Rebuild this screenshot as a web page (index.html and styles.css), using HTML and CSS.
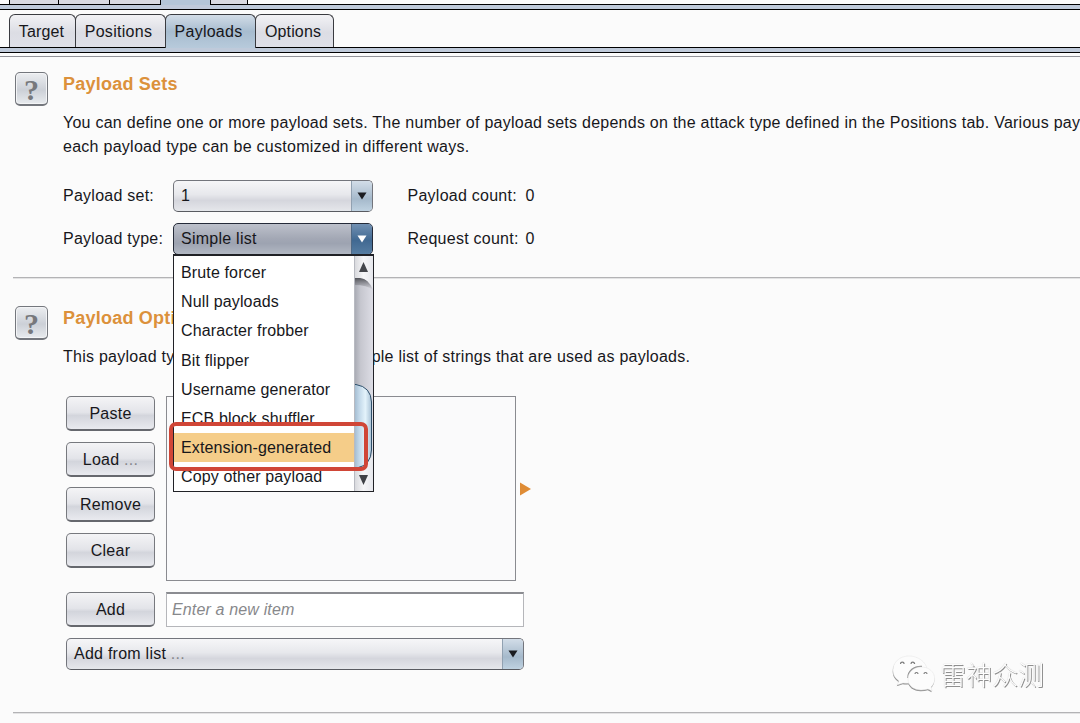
FILE: index.html
```html
<!DOCTYPE html>
<html lang="en">
<head>
<meta charset="utf-8">
<title>Payloads</title>
<link rel="stylesheet" href="styles.css">
</head>
<body>
<div class="outer-tabs"><i class="stub s1"></i><i class="stub s2"></i><i class="stub s3"></i><i class="stub s4 active"></i><i class="stub s5"></i></div>
<div class="band outer-band"></div>
<nav class="tabs">
  <div class="tab t-target">Target</div>
  <div class="tab t-positions">Positions</div>
  <div class="tab t-payloads active">Payloads</div>
  <div class="tab t-options">Options</div>
</nav>
<div class="band inner-band"></div>
<div class="pane-edge"></div>
<main>
  <section class="section sets">
    <div class="help">?</div>
    <div class="body">
      <h2>Payload Sets</h2>
      <p class="desc">You can define one or more payload sets. The number of payload sets depends on the attack type defined in the Positions tab. Various pay<br><span class="line2">each payload type can be customized in different ways.</span></p>
      <div class="form">
        <label>Payload set:</label>
        <div class="combo"><span class="value">1</span><span class="arrow"><svg width="10" height="8"><path d="M0.5 0.5h9L5 7.5z"/></svg></span></div>
        <span class="count">Payload count:</span><span class="num">0</span>
        <label class="type-label">Payload type:</label>
        <div class="combo open"><span class="value">Simple list</span><span class="arrow"><svg width="10" height="8"><path d="M0.5 0.5h9L5 7.5z"/></svg></span>
          <div class="menu">
            <div class="items">
              <div class="item">Brute forcer</div>
              <div class="item">Null payloads</div>
              <div class="item">Character frobber</div>
              <div class="item">Bit flipper</div>
              <div class="item">Username generator</div>
              <div class="item">ECB block shuffler</div>
              <div class="item selected">Extension-generated</div>
              <div class="item">Copy other payload</div>
            </div>
            <svg class="scroll" width="19" height="235" viewBox="0 0 19 235">
              <defs>
                <linearGradient id="track"><stop offset="0" stop-color="#a5a7b0"/><stop offset=".35" stop-color="#c6c7cf"/><stop offset="1" stop-color="#dddde5"/></linearGradient>
                <linearGradient id="thumb"><stop offset="0" stop-color="#9fb8cd"/><stop offset=".3" stop-color="#c2d8e9"/><stop offset=".65" stop-color="#e4f3fb"/><stop offset="1" stop-color="#a9c2d6"/></linearGradient>
                <linearGradient id="btn"><stop offset="0" stop-color="#d5d6da"/><stop offset=".5" stop-color="#f6f6f8"/><stop offset="1" stop-color="#e6e7ec"/></linearGradient>
                <linearGradient id="fade" x2="0" y2="1"><stop offset="0" stop-color="#45464c"/><stop offset="1" stop-color="#77787e" stop-opacity="0"/></linearGradient>
              </defs>
              <rect width="19" height="235" fill="url(#track)"/>
              <path d="M0 21h5q9 1 14 13-6-5-19-5z" fill="url(#fade)"/>
              <path d="M0 0h19v33q-4-10-13-11H0z" fill="url(#btn)"/>
              <path d="M9.500 6l4.500 10H5z" fill="#44464b"/>
              <path d="M0 212h4q11-3 15-14v37H0z" fill="url(#btn)"/>
              <path d="M0 128.500h2Q17 131 17.500 146v48Q17 209 3 212H0z" fill="url(#thumb)" stroke="#2e4f6a"/>
              <path d="M5 219h9l-4.500 10z" fill="#3f4146"/>
              <path d="M.5 0v235" stroke="#b8bac1"/>
            </svg>
          </div>
          <div class="callout"></div>
        </div>
        <span class="count">Request count:</span><span class="num">0</span>
      </div>
    </div>
  </section>
  <section class="section options">
    <div class="help">?</div>
    <div class="body">
      <h2>Payload Options [Simple list]</h2>
      <p class="desc">This payload type lets you configure a simple list of strings that are used as payloads.</p>
      <div class="editor">
        <div class="buttons">
          <div class="btn">Paste</div>
          <div class="btn">Load <span class="dots">...</span></div>
          <div class="btn">Remove</div>
          <div class="btn">Clear</div>
        </div>
        <div class="list"></div>
        <svg class="marker" width="11" height="14"><path d="M0 .5L11 7 0 13.500z"/></svg>
      </div>
      <div class="add-row"><div class="btn">Add</div><div class="field">Enter a new item</div></div>
      <div class="combo wide"><span class="value">Add from list <span class="dots">...</span></span><span class="arrow"><svg width="10" height="8"><path d="M0.5 0.5h9L5 7.5z"/></svg></span></div>
    </div>
  </section>
</main>
<div class="watermark">
  <svg width="44" height="38" viewBox="0 0 44 38">
    <g class="shade" transform="translate(-.3 1.200)"><path d="M17 1C8 1 1 7 1 15c0 5 2 8 6 11l-2 4 6-2q6 1 11-1l13-13C34 7 26 1 17 1z"/><path d="M29 12c-7 0-13 5-13 12s6 11 13 11q4 0 7-1l4 2-1-4c7-6 4-20-10-20z"/></g>
    <path class="bubble" d="M17 1C8 1 1 7 1 15c0 5 2 8 6 11l-2 4 6-2q6 1 11-1l13-13C34 7 26 1 17 1z"/>
    <path class="edge" d="M16 23c0-7 6-12 14-11.500"/>
    <path class="front" d="M29 12c-7 0-13 5-13 12s6 11 13 11q4 0 7-1l4 2-1-4c7-6 4-20-10-20z"/>
    <path class="eyes" d="M8.500 9a1.800 1.800 0 0 1 3.600 0M19 9a1.800 1.800 0 0 1 3.600 0M23 19a1.500 1.500 0 0 1 3 0M32 19a1.500 1.500 0 0 1 3 0"/>
  </svg>
  <span>雷神众测</span>
</div>
</body>
</html>
```
FILE: styles.css
```css
* { box-sizing: border-box; }
body {
  margin: 0; width: 1080px; height: 723px; overflow: hidden; position: relative;
  background: #fbfbfb; color: #17171b;
  font: 16px/24px "Liberation Sans", Arial, sans-serif; letter-spacing: .25px;
}
.outer-tabs { display: flex; height: 4px; padding-left: 9px; }
.stub { height: 4px; border-right: 1px solid #000; background: #d9dae1; }
.s1 { width: 50px; border-left: 1px solid #000; }
.s2 { width: 51px; }
.s3 { width: 51px; }
.s4 { width: 50px; }
.s5 { width: 37px; }
.stub.active { height: 5px; background: #b4c6d8; position: relative; }
.band { height: 6px; background: #bfcada; border-top: 1px solid #000; border-bottom: 1px solid #000; }
.tabs { display: flex; height: 37px; padding: 4px 0 0 9px; position: relative; }
.tab {
  height: 33px; border: 1px solid #3a3b40; border-bottom: 0; border-radius: 6px 6px 0 0;
  background: linear-gradient(#f2f2f5, #dcdde4 55%, #dfe0e8);
  text-align: center; line-height: 33px; margin-right: -1px; padding-right: 2px; letter-spacing: .15px;
}
.t-target { width: 67px; }
.t-positions { width: 91px; padding-right: 4px; letter-spacing: .3px; }
.t-payloads { width: 91px; padding-right: 4px; letter-spacing: .25px; }
.t-options { width: 79px; padding-right: 3px; }
.tab.active { height: 34px; background: linear-gradient(#d2dce7, #a7bccf 50%, #b7cadb); position: relative; z-index: 1; }
.pane-edge { height: 4px; border-bottom: 1px solid #919298; }
.section { margin-left: 13px; display: flex; border-bottom: 1px solid #b3b3b5; box-shadow: 0 1px #e3e3e4; padding-left: 2px; }
.sets { height: 221px; padding-top: 15px; }
.options { height: 435px; padding-top: 28px; }
.help {
  width: 33px; height: 34px; flex: none; margin-right: 15px;
  border: 1px solid #74777d; border-bottom-width: 2px; border-radius: 5px; background: linear-gradient(#eceef1, #ccd0d7 55%, #e8ebee);
  box-shadow: inset 0 0 0 1px #f3f4f6;
  color: #77787c; font: bold 30px/33px "Liberation Serif", serif; text-align: center;
}
.body { flex: none; width: 1017px; }
h2 { margin: 0; font-size: 18px; line-height: 24px; color: #dc913b; letter-spacing: .23px; }
.desc { margin: 15px 0 0; white-space: nowrap; letter-spacing: .255px; }
.line2 { letter-spacing: .27px; }
.form { display: grid; grid-template-columns: 110px 234.5px 118px auto; grid-auto-rows: 32px; row-gap: 11px; margin-top: 21px; align-items: center; }
.combo {
  position: relative; width: 200px; height: 32px; display: flex; align-items: center; justify-content: space-between;
  border: 1px solid #73757c; border-bottom-color: #595b61; border-radius: 5px;
  background: linear-gradient(#f6f6f8, #e7e8ec 45%, #d5d6dd 65%, #e5e7eb);
}
.value { padding-left: 7px; }
.arrow {
  width: 21px; height: 30px; border-left: 1px solid #91a1b1; border-radius: 0 4px 4px 0;
  background: linear-gradient(#d2dde8, #a5b9cb 60%, #bfd2e1); display: flex; align-items: center; justify-content: center;
}
.arrow svg { fill: #1b1c20; }
.open { border-color: #242a38; background: linear-gradient(#bdc1cb, #a2a7b4 50%, #9da3b1 65%, #b2b8c3); }
.open .arrow { border-color: #506985; background: linear-gradient(#7190b2, #416992 55%, #567da2); }
.open .arrow svg { fill: #fff; }
.menu { position: absolute; left: -1px; top: 30px; width: 201px; height: 238px; border: 1px solid #202126; border-top-width: 2px; background: #fff; display: flex; z-index: 2; letter-spacing: .14px; }
.items { flex: 1; padding-top: 2px; }
.item { height: 29.200px; line-height: 30px; padding-left: 7px; white-space: nowrap; }
.selected { background: #f5cd89; }
.scroll { flex: none; }
.callout { position: absolute; z-index: 3; left: -5px; top: 198px; width: 199px; height: 49px; border: 4px solid #d04637; border-radius: 7px; }
.editor { display: flex; margin: 27px 0 0 3px; height: 185px; align-items: flex-start; }
.buttons { display: grid; row-gap: 11.600px; width: 101px; }
.btn {
  width: 89px; height: 35px; border: 1px solid #77797e; border-bottom: 2px solid #66686e; border-radius: 5px;
  background: linear-gradient(#f4f4f6, #e3e4e9 48%, #d3d5dc 58%, #e9eaef);
  text-align: center; line-height: 33px;
}
.buttons { row-gap: 10.600px; }
.dots { color: #85868b; }
.list { width: 350px; height: 185px; border: 1px solid #8a8b90; background: #fafafb; margin-right: 4px; margin-left: -1px; }
.marker { align-self: center; fill: #df8c35; }
.add-row { display: flex; margin: 11px 0 0 3px; }
.field { margin-left: 11px; width: 358px; height: 35px; border: 1px solid #b5b6ba; border-top: 2px solid #8b8c91; background: #fff; color: #87888b; font-style: italic; line-height: 31px; padding-left: 5px; letter-spacing: .15px; }
.wide { width: 458px; margin: 11px 0 0 3px; }
.watermark { position: absolute; left: 892px; top: 655px; display: flex; font: 300 26px/38px "Noto Sans CJK SC", sans-serif; letter-spacing: 0; color: #fff; text-shadow: 1px 1px 0 #8d8d8d, 0 0 1px #b5b5b5; opacity: .98; will-change: opacity; }
.watermark span { margin-left: 4px; }
.bubble, .front { fill: #fdfdfd; stroke: #e2e2e2; stroke-width: .5; }
.shade { fill: #8b8b8b; }
.edge { fill: none; stroke: #909090; stroke-width: 1.600; }
.eyes { fill: none; stroke: #777; stroke-width: 1.200; }
```
